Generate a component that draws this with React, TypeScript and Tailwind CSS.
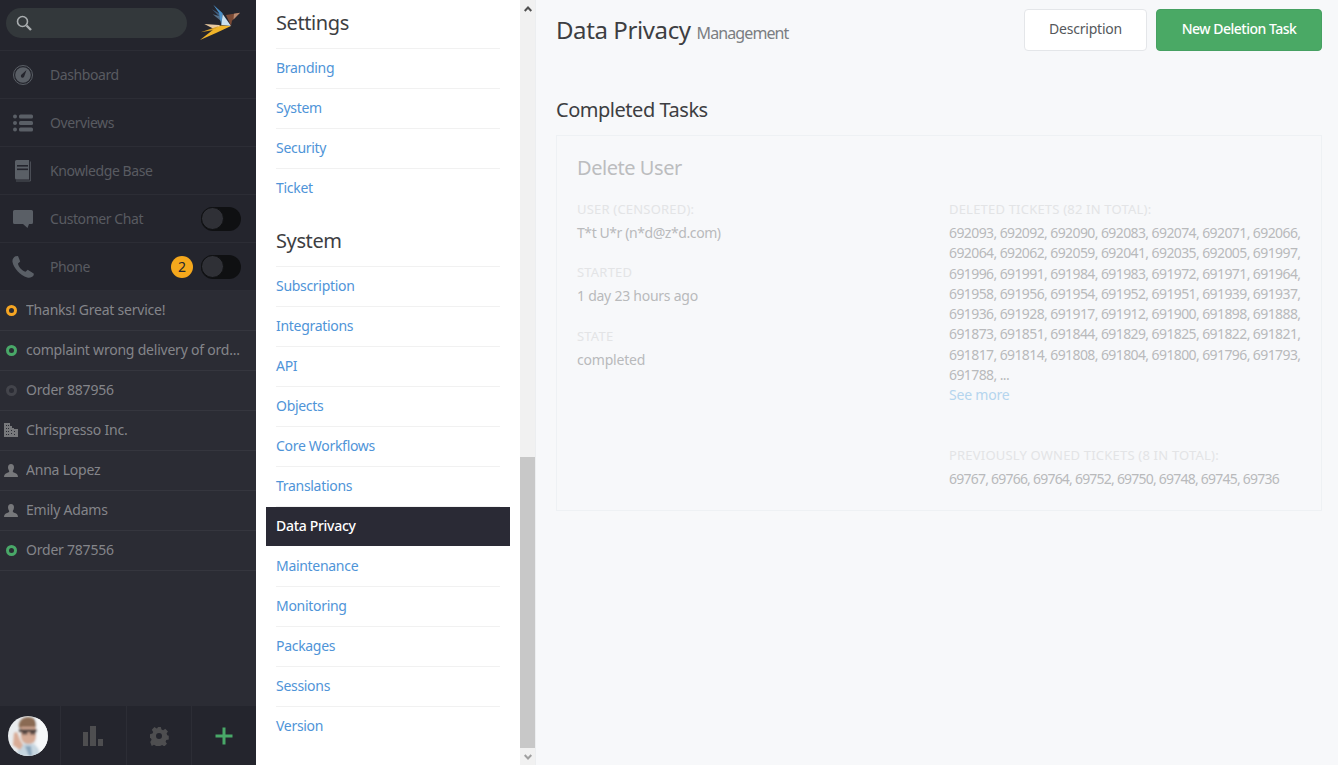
import React from "react";

const ic = "#5a5f66";

function Logo() {
  return (
    <svg width="46" height="40" viewBox="196 2 46 40" className="shrink-0">
      <polygon points="212,9.300 221,14.500 221,18" fill="#3f5f80" />
      <polygon points="212.700,14.300 221,16.500 221,21" fill="#55708a" />
      <polygon points="213.300,4.700 222.700,13.300 221.300,25 219,13" fill="#4a90c8" />
      <polygon points="222.700,14 231,26 221.300,25" fill="#c9e0f0" />
      <polygon points="226,15 240,12.700 232,20.700 231,26" fill="#7b4a35" />
      <polygon points="234,13.700 240,12.700 233.500,19.500" fill="#b98a70" />
      <polygon points="204.300,24 219,25 222,27 213,28.500" fill="#e8c9a0" />
      <polygon points="200.700,32.300 219,26 214,30" fill="#d9a024" />
      <polygon points="200,40 214,29 221,25.500 231,26 216,33" fill="#f0b429" />
    </svg>
  );
}

function Gauge() {
  return (
    <svg width="20" height="20" viewBox="0 0 20 20">
      <circle cx="10" cy="10" r="9.500" fill="none" stroke={ic} strokeWidth="1" />
      <circle cx="10" cy="10" r="7.800" fill={ic} />
      <path d="M13.500 5 L11.200 11.400 A1.700 1.700 0 1 1 8.600 9.600 Z" fill="#24252d" />
    </svg>
  );
}
function ListI() {
  return (
    <svg width="20" height="18" viewBox="0 0 20 18" fill={ic}>
      <circle cx="2" cy="2.500" r="2" />
      <circle cx="2" cy="9" r="2" />
      <circle cx="2" cy="15.500" r="2" />
      <rect x="6" y="0.500" width="14" height="4" rx="1.500" />
      <rect x="6" y="7" width="14" height="4" rx="1.500" />
      <rect x="6" y="13.500" width="14" height="4" rx="1.500" />
    </svg>
  );
}
function Book() {
  return (
    <svg width="18" height="22" viewBox="0 0 18 22">
      <path d="M1 1.500A1.500 1.500 0 0 1 2.500 0H15v19.500H2.500A1.500 1.500 0 0 1 1 18Z" fill={ic} />
      <path d="M16.400 1.500V21H2" fill="none" stroke={ic} strokeWidth="0.800" />
      <rect x="3" y="5" width="11" height="1.600" fill="#24252d" />
      <rect x="3" y="8.500" width="11" height="1.600" fill="#24252d" />
    </svg>
  );
}
function Chat() {
  return (
    <svg width="20" height="18" viewBox="0 0 20 18" fill={ic}>
      <path d="M1.500 0h17A1.500 1.500 0 0 1 20 1.500v11a1.500 1.500 0 0 1-1.500 1.500H16l-1.500 4-4.500-4H1.500A1.500 1.500 0 0 1 0 12.500v-11A1.500 1.500 0 0 1 1.500 0Z" />
    </svg>
  );
}
function Phone() {
  return (
    <svg width="22" height="22" viewBox="0 0 22 22" fill={ic}>
      <path d="M3.500 0.300 L6 0 L8.200 5.500 L6 7.500 C6.300 10.500 10 15 13.500 15.700 L15.700 13.700 L21.700 17.500 L21.800 19 C20.500 21.500 17.500 22.300 15.200 21.500 C8 19 1.800 12.500 0.500 6 C0.100 3.500 1.500 1.200 3.500 0.300 Z" />
    </svg>
  );
}

function Toggle() {
  return (
    <div className="flex h-6 w-10 items-center rounded-full bg-[#0f1012]">
      <div className="h-[23px] w-[23px] rounded-full border border-[#0f1012] bg-[#2f3036]" />
    </div>
  );
}

function NavRow({ icon, label, right }: { icon: React.ReactNode; label: string; right?: React.ReactNode }) {
  return (
    <div className="flex h-12 items-center border-b border-[#2c2d35] pr-[15px]">
      <div className="flex w-[46px] shrink-0 justify-center">{icon}</div>
      <span className="ml-1 flex-1 tracking-[-0.42px] text-[#595b61]">{label}</span>
      {right}
    </div>
  );
}

function Ring({ c }: { c: string }) {
  return <div className={`h-[11px] w-[11px] rounded-full border-[3px] ${c}`} />;
}
function Org() {
  return (
    <svg width="14" height="14" viewBox="0 0 14 14" fill="#77787b">
      <path d="M0 0h6v3h2v2h2v1h4v8H0Z" />
      <g fill="#2b2c34">
        <rect x="2" y="2" width="1" height="1" />
        <rect x="4" y="2" width="1" height="1" />
        <rect x="2" y="5" width="1" height="1" />
        <rect x="4" y="5" width="1" height="1" />
        <rect x="7" y="7" width="1" height="1" />
        <rect x="10" y="8" width="1" height="1" />
        <rect x="2" y="8" width="1" height="1" />
        <rect x="4" y="8" width="1" height="1" />
        <rect x="7" y="10" width="1" height="1" />
        <rect x="10" y="11" width="1" height="1" />
        <rect x="2" y="11" width="1" height="1" />
        <rect x="4" y="11" width="1" height="1" />
      </g>
    </svg>
  );
}
function Person() {
  return (
    <svg width="14" height="13" viewBox="0 0 14 13" fill="#77787b">
      <path d="M7 0C9 0 10 1.500 10 3.300 10 5 9.300 6 8.800 7 8.600 8 9.500 8.500 11 9 12.500 9.500 14 10.500 14 13H0C0 10.500 1.500 9.500 3 9 4.500 8.500 5.400 8 5.200 7 4.700 6 4 5 4 3.300 4 1.500 5 0 7 0Z" />
    </svg>
  );
}

function TaskRow({ icon, label }: { icon: React.ReactNode; label: string }) {
  return (
    <div className="flex h-10 items-center border-b border-[#35363e] pb-px">
      <div className="flex w-[22px] shrink-0 justify-center">{icon}</div>
      <span className="ml-1 truncate pb-px pr-3 tracking-[-0.22px] text-[#84858a]">{label}</span>
    </div>
  );
}

function Avatar() {
  return (
    <svg width="40" height="40" viewBox="0 0 40 40" className="rounded-full">
      <defs>
        <filter id="soft" x="-10%" y="-10%" width="120%" height="120%">
          <feGaussianBlur stdDeviation="0.900" />
        </filter>
      </defs>
      <rect width="40" height="40" fill="#e9ecee" />
      <g filter="url(#soft)">
        <path d="M28 0h12v40H28Z" fill="#f6f8f9" />
        <path d="M9 40c0-9 5-13 11-13s12 4 12 13Z" fill="#c6d6e0" />
        <path d="M17 30l4 10h3l-1-10Z" fill="#8aa6bc" />
        <path d="M11 11c-1-6 4-10 9-10 6 0 9 4 8 10l-1 3H13Z" fill="#8a6a52" />
        <path d="M13 11h15v9c0 5-3 8-7.500 8S13 25 13 20Z" fill="#d5ab96" />
        <rect x="11" y="13.500" width="18" height="2.400" fill="#2f2b2a" />
        <rect x="14" y="15" width="5.500" height="3.500" fill="#5a4a44" />
        <rect x="22" y="15" width="5.500" height="3.500" fill="#5a4a44" />
        <path d="M5 29l1-12 3-1 3 8 3 5-3 5Z" fill="#d9ac96" />
      </g>
    </svg>
  );
}

const settings = ["Branding", "System", "Security", "Ticket"];
const system = ["Subscription", "Integrations", "API", "Objects", "Core Workflows", "Translations", "Data Privacy", "Maintenance", "Monitoring", "Packages", "Sessions", "Version"];
const lines = [
  "692093, 692092, 692090, 692083, 692074, 692071, 692066,",
  "692064, 692062, 692059, 692041, 692035, 692005, 691997,",
  "691996, 691991, 691984, 691983, 691972, 691971, 691964,",
  "691958, 691956, 691954, 691952, 691951, 691939, 691937,",
  "691936, 691928, 691917, 691912, 691900, 691898, 691888,",
  "691873, 691851, 691844, 691829, 691825, 691822, 691821,",
  "691817, 691814, 691808, 691804, 691800, 691796, 691793,",
  "691788, ...",
];

function MenuRows({ items }: { items: string[] }) {
  return (
    <>
      {items.map((t, i) =>
        t === "Data Privacy" ? (
          <div key={t} className="-mx-2.5 mb-px flex h-[39px] items-center bg-[#2a2a35] px-2.5 pb-px font-medium tracking-[-0.3px] text-white">
            {t}
          </div>
        ) : (
          <div key={t} className={`flex h-10 items-center pb-[2px] tracking-[-0.3px] text-[#4f94d8] ${i < items.length - 1 ? "border-b border-[#f1f1f1]" : ""}`}>
            {t}
          </div>
        ),
      )}
    </>
  );
}

const Label = ({ children }: { children: React.ReactNode }) => (
  <div className="flex h-5 items-center text-[13px] uppercase tracking-[0.2px] text-[#e3e4e6]">{children}</div>
);

export default function App() {
  return (
    <div className="flex h-[765px] w-full overflow-hidden font-['Noto_Sans','Liberation_Sans',sans-serif] text-sm tracking-[-0.2px]">
      <aside className="flex w-64 shrink-0 flex-col bg-[#2b2c34]">
        <div className="bg-[#24252d]">
          <div className="flex h-[51px] items-start border-b border-[#2c2d35] pl-1.5">
            <div className="mt-2 flex h-[30px] w-[181px] items-center rounded-full bg-[#33383b] pl-2.5">
              <svg width="16" height="16" viewBox="0 0 16 16" fill="none" stroke="#a9adaf" strokeWidth="1.600">
                <circle cx="6.500" cy="6.500" r="5" />
                <path d="M10.500 10.500L15 15" strokeWidth="2.400" />
              </svg>
            </div>
            <div className="ml-[9px] mt-0.5">
              <Logo />
            </div>
          </div>
          <NavRow icon={<Gauge />} label="Dashboard" />
          <NavRow icon={<ListI />} label="Overviews" />
          <NavRow icon={<Book />} label="Knowledge Base" />
          <NavRow icon={<Chat />} label="Customer Chat" right={<Toggle />} />
          <NavRow
            icon={<Phone />}
            label="Phone"
            right={
              <div className="flex items-center gap-2">
                <div className="flex h-[22px] w-[22px] items-center justify-center rounded-full bg-[#f5a81c] text-[#24252d]">2</div>
                <Toggle />
              </div>
            }
          />
        </div>
        <TaskRow icon={<Ring c="border-[#f6a623]" />} label="Thanks! Great service!" />
        <TaskRow icon={<Ring c="border-[#49a868]" />} label="complaint wrong delivery of ord..." />
        <TaskRow icon={<Ring c="border-[#43444b]" />} label="Order 887956" />
        <TaskRow icon={<Org />} label="Chrispresso Inc." />
        <TaskRow icon={<Person />} label="Anna Lopez" />
        <TaskRow icon={<Person />} label="Emily Adams" />
        <TaskRow icon={<Ring c="border-[#49a868]" />} label="Order 787556" />
        <div className="flex-1" />
        <div className="flex h-[59px] items-stretch bg-[#24252d]">
          <div className="w-[61px] border-r border-[#2c2d35] pl-2 pt-2.5">
            <Avatar />
          </div>
          <div className="flex w-[66px] items-center justify-center border-r border-[#2c2d35] pr-[2px]">
            <svg width="20" height="20" viewBox="0 0 20 20" fill="#4e4e50">
              <rect x="0" y="6" width="5" height="14" />
              <rect x="7" y="0" width="6" height="20" />
              <rect x="15" y="13" width="5" height="7" />
            </svg>
          </div>
          <div className="flex w-[65px] items-center justify-center border-r border-[#2c2d35] pr-px">
            <svg width="20" height="20" viewBox="0 0 24 24" fill="#4e4e50">
              <path
                fillRule="evenodd"
                d="M9.500 0h5l.8 3.300 2.200.9 2.900-1.800 3.500 3.500-1.800 2.900.9 2.200 2 .5v5l-3.300.8-.9 2.200 1.800 2.900-3.500 3.500-2.900-1.800-2.200.9-.8 2.800h-5l-.8-3.300-2.200-.9-2.900 1.800L0.300 20l1.800-2.900-.9-2.200L0 14.500v-5l3.300-.8.900-2.200L2.400 3.600 5.900.1l2.900 1.800 2.200-.9ZM12 8a4 4 0 1 0 0 8 4 4 0 0 0 0-8Z"
                transform="translate(1.200 1.200) scale(.9)"
              />
            </svg>
          </div>
          <div className="flex flex-1 items-center justify-center">
            <svg width="18" height="18" viewBox="0 0 18 18" fill="#49a868">
              <rect x="7.500" y="0.500" width="3" height="17" />
              <rect x="0.500" y="7.500" width="17" height="3" />
            </svg>
          </div>
        </div>
      </aside>

      <nav className="w-[264px] shrink-0 bg-white px-5">
        <div className="flex h-[49px] items-center border-b border-[#f1f1f1] pb-[3px] text-xl tracking-[-0.4px] text-[#3d3e42]">Settings</div>
        <MenuRows items={settings} />
        <div className="mt-[9px] flex h-[49px] items-center border-b border-[#f1f1f1] pb-[3px] text-xl tracking-[-0.4px] text-[#3d3e42]">System</div>
        <MenuRows items={system} />
      </nav>

      <div className="flex w-[15px] shrink-0 flex-col bg-[#f1f1f1]">
        <div className="flex h-[17px] items-center justify-center">
          <svg width="8" height="6" viewBox="0 0 8 6" fill="none" stroke="#505050" strokeWidth="2">
            <path d="M.7 5L4 1.500 7.300 5" />
          </svg>
        </div>
        <div className="h-[440px]" />
        <div className="flex-1 bg-[#c8c8c8]" />
        <div className="flex h-[17px] items-center justify-center">
          <svg width="8" height="6" viewBox="0 0 8 6" fill="none" stroke="#a0a0a0" strokeWidth="2">
            <path d="M.7 1L4 4.500 7.300 1" />
          </svg>
        </div>
      </div>

      <main className="min-w-0 flex-1 border-l border-[#eceef0] bg-[#f7f8fa] pl-5 pr-4">
        <header className="flex items-start justify-between pt-[9px]">
          <div className="flex items-baseline gap-[6px] pt-[5px]">
            <span className="text-2xl tracking-[-0.4px] text-[#3d3e42]">Data Privacy</span>
            <span className="text-base tracking-[-0.9px] text-[#7b7e82]">Management</span>
          </div>
          <div className="flex gap-[9px]">
            <button className="h-[42px] w-[123px] rounded border border-[#e4e6e9] bg-white pb-[2px] text-[#55585c]">Description</button>
            <button className="h-[42px] w-[166px] rounded border border-[#46a062] bg-[#4aa965] pb-[2px] font-medium tracking-[-0.5px] text-white">New Deletion Task</button>
          </div>
        </header>
        <h2 className="mt-[45px] h-7 text-xl leading-7 tracking-[-0.47px] text-[#3d3e42]">Completed Tasks</h2>
        <section className="mt-[11px] h-[376px] border border-[#eef1f4] px-5 pt-[18px]">
          <h3 className="h-7 text-xl leading-7 tracking-[-0.45px] text-[#bcbdbf]">Delete User</h3>
          <div className="mt-[17px] grid grid-cols-2 gap-x-5">
            <div>
              <Label>User (censored):</Label>
              <div className="mt-1 h-5 leading-5 tracking-[-0.42px] text-[#b9babc]">T*t U*r (n*d@z*d.com)</div>
              <div className="mt-[19px]"><Label>Started</Label></div>
              <div className="mt-1 h-5 leading-5 tracking-[-0.25px] text-[#b9babc]">1 day 23 hours ago</div>
              <div className="mt-5"><Label>State</Label></div>
              <div className="mt-1 h-5 leading-5 text-[#b9babc]">completed</div>
            </div>
            <div>
              <Label>Deleted tickets (82 in total):</Label>
              <div className="mt-1 whitespace-nowrap leading-[1.45] tracking-[-0.6px] text-[#b9babc]">
                {lines.map((l) => (
                  <div key={l}>{l}</div>
                ))}
              </div>
              <div className="h-5 leading-5 text-[#b5d5ee]">See more</div>
              <div className="mt-10"><Label>Previously owned tickets (8 in total):</Label></div>
              <div className="mt-1 h-5 whitespace-nowrap leading-5 tracking-[-0.78px] text-[#b9babc]">69767, 69766, 69764, 69752, 69750, 69748, 69745, 69736</div>
            </div>
          </div>
        </section>
      </main>
    </div>
  );
}
